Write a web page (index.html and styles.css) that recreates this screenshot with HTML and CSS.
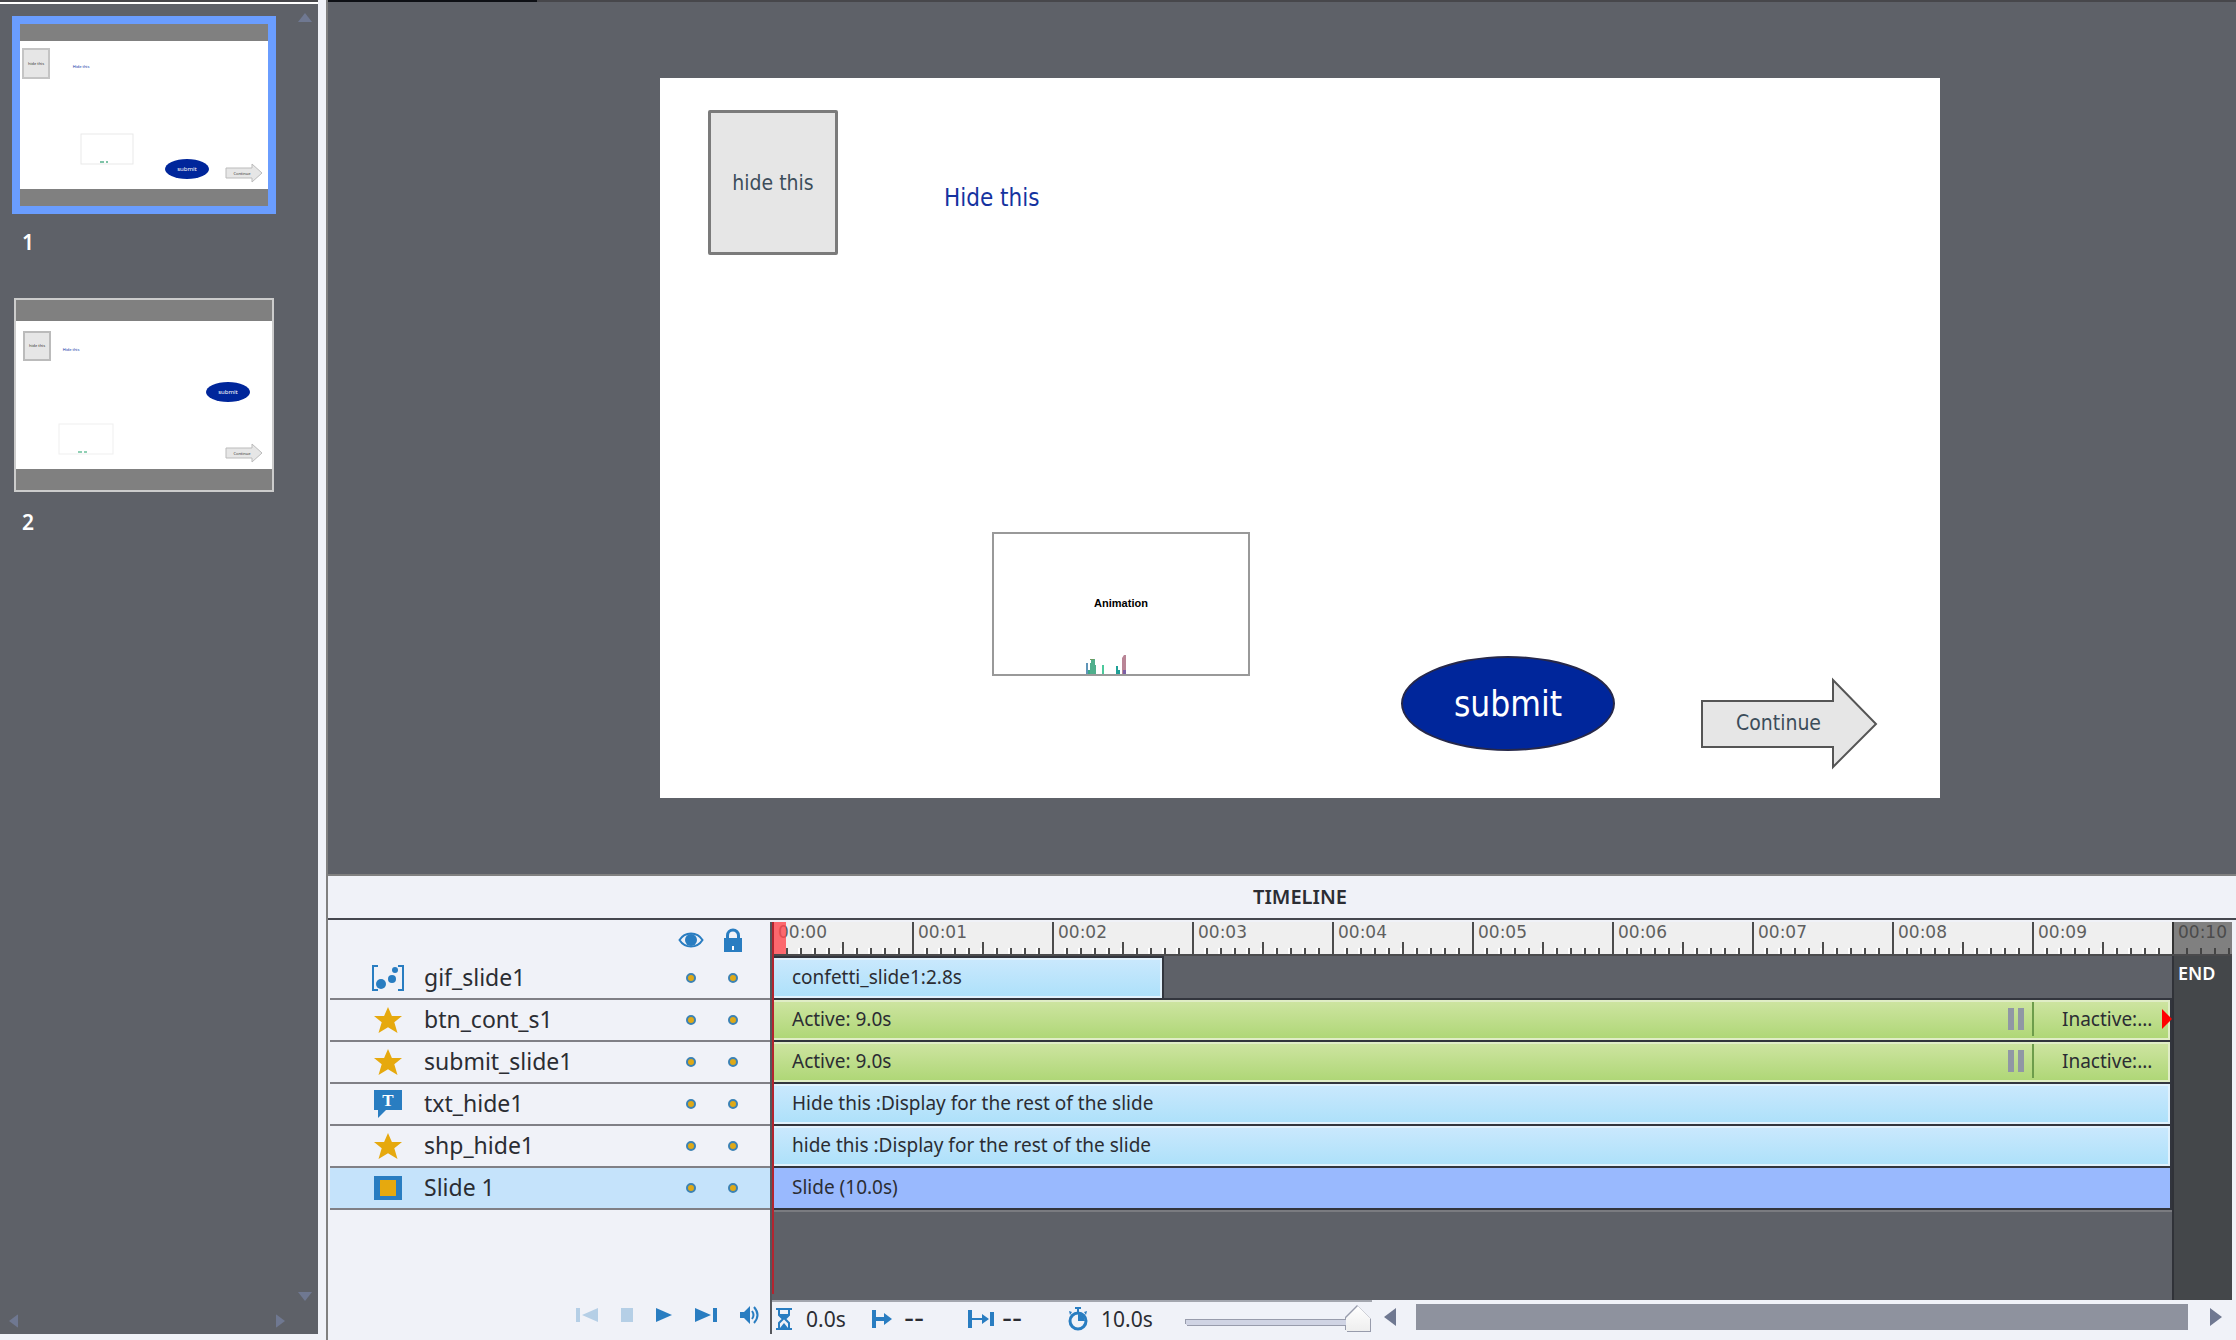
FILE: index.html
```html
<!DOCTYPE html>
<html lang="en">
<head>
<meta charset="utf-8">
<title>Timeline editor</title>
<link rel="stylesheet" href="styles.css">
</head>
<body>
<svg class="defs" aria-hidden="true">
  <defs>
    <symbol id="star" viewBox="0 0 28 26"><path fill="#e6a90e" d="M14 0l3.900 9H28l-7.700 6.200L23.500 26 14 20.200 4.500 26l3.200-10.800L0 9h10.100z"/></symbol>
    <symbol id="up" viewBox="0 0 14 9"><path fill="currentColor" d="M7 0l7 9H0z"/></symbol>
    <symbol id="side" viewBox="0 0 12 18"><path fill="currentColor" d="M0 0l12 9-12 9z"/></symbol>
  </defs>
</svg>
<div class="app">
  <aside class="filmstrip">
    <div class="film-body">
      <ol class="thumbs">
        <li>
          <button class="thumb selected" aria-label="Slide 1">
            <svg viewBox="0 0 248 182" width="248" height="182">
              <rect width="248" height="182" fill="#808080"/><rect y="17" width="248" height="148" fill="#fff"/>
              <rect x="3" y="25" width="26" height="29" fill="#e6e6e6" stroke="#c4c4c4" stroke-width="2"/>
              <text x="16" y="41" class="tiny dark">hide this</text>
              <text x="61" y="44" class="tiny blue">Hide this</text>
              <rect x="61" y="110" width="52" height="30" fill="#fff" stroke="#e9e9e9"/>
              <path d="M80 138h4M86 138h2" stroke="#7fc4a8" stroke-width="2"/>
              <ellipse cx="167" cy="145" rx="22" ry="10" fill="#00269b"/>
              <text x="167" y="147" class="small white">submit</text>
              <path d="M206 144h26v-4l10 9-10 9v-4h-26z" fill="#e6e6e6" stroke="#bbb"/>
              <text x="222" y="151" class="tiny dark">Continue</text>
            </svg>
          </button>
          <span class="num">1</span>
        </li>
        <li>
          <button class="thumb" aria-label="Slide 2">
            <svg viewBox="0 0 256 190" width="256" height="190">
              <rect width="256" height="190" fill="#808080"/><rect y="21" width="256" height="148" fill="#fff"/>
              <rect x="8" y="32" width="26" height="28" fill="#e6e6e6" stroke="#bbb" stroke-width="2"/>
              <text x="21" y="47" class="tiny dark">hide this</text>
              <text x="55" y="51" class="tiny blue">Hide this</text>
              <rect x="43" y="124" width="54" height="30" fill="#fff" stroke="#efefef"/>
              <path d="M62 152h4M68 152h3" stroke="#8fd0b4" stroke-width="2"/>
              <ellipse cx="212" cy="92" rx="22" ry="10" fill="#00269b"/>
              <text x="212" y="94" class="small white">submit</text>
              <path d="M210 148h26v-4l10 9-10 9v-4h-26z" fill="#e6e6e6" stroke="#bbb"/>
              <text x="226" y="155" class="tiny dark">Continue</text>
            </svg>
          </button>
          <span class="num">2</span>
        </li>
      </ol>
      <div class="vscroll">
        <button aria-label="Scroll up"><svg width="14" height="9"><use href="#up"/></svg></button>
        <button class="flip" aria-label="Scroll down"><svg width="14" height="9"><use href="#up"/></svg></button>
      </div>
    </div>
    <div class="hscroll">
      <button class="flip" aria-label="Scroll left"><svg width="9" height="14" viewBox="0 0 12 18"><use href="#side"/></svg></button>
      <button aria-label="Scroll right"><svg width="9" height="14" viewBox="0 0 12 18"><use href="#side"/></svg></button>
    </div>
  </aside>

  <main class="work">
    <div class="topstrip"><span></span></div>
    <section class="stage">
      <div class="slide">
        <div class="obj box">hide this</div>
        <div class="obj caption">Hide this</div>
        <div class="obj anim">
          <span>Animation</span>
          <svg width="44" height="20" viewBox="0 0 44 20">
            <rect x="1" y="9" width="2" height="11" fill="#5f95b8"/><rect x="3" y="16" width="3" height="4" fill="#3aa888"/>
            <path d="M5 9h1V5h4v6h1v9H5z" fill="#4faf8c"/><path d="M5 5h4v1H5z" fill="#6e9c62"/>
            <rect x="17" y="11" width="2" height="9" fill="#4cc99b"/><path d="M31 12h2v4h2v4h-4z" fill="#1fa097"/>
            <path d="M37 4l2-3h2v19h-4z" fill="#b98596"/><rect x="38" y="16" width="3" height="4" fill="#7b5fa5"/>
          </svg>
        </div>
        <button class="obj submit">submit</button>
        <button class="obj cont">
          <svg width="180" height="94" viewBox="0 0 180 94"><path d="M2 24h131V3l43 44-43 43V70H2z" fill="#e6e6e6" stroke="#555" stroke-width="2"/></svg>
          <span>Continue</span>
        </button>
      </div>
    </section>

    <section class="timeline">
      <h2>TIMELINE</h2>
      <div class="panes">
        <div class="layers">
          <div class="layer-head">
            <svg width="26" height="16" viewBox="0 0 26 16"><path d="M1.500 8C4 4 8 1.500 13 1.500S22 4 24.500 8C22 12 18 14.500 13 14.500S4 12 1.500 8z" fill="#f0f2f8" stroke="#297dc1" stroke-width="2"/><circle cx="13" cy="8" r="6" fill="#297dc1"/></svg>
            <svg width="18" height="24" viewBox="0 0 18 24"><path d="M3.500 11V7.500a5.500 5.500 0 0 1 11 0V11" fill="none" stroke="#297dc1" stroke-width="3"/><path fill="#297dc1" d="M0 10h18v14H0z"/><path fill="#fff" d="M8 18h2v4H8z"/></svg>
          </div>
          <div class="layer">
            <svg width="32" height="26" viewBox="0 0 32 26"><path d="M6 1H1v24h5M26 1h5v24h-5" fill="none" stroke="#297dc1" stroke-width="2"/><g fill="#297dc1"><circle cx="9" cy="19" r="5"/><circle cx="20" cy="14" r="4"/><circle cx="23" cy="5" r="3"/></g></svg>
            <span>gif_slide1</span><input type="checkbox" aria-label="Show gif_slide1"><input type="checkbox" aria-label="Lock gif_slide1">
          </div>
          <div class="layer"><svg width="28" height="26"><use href="#star"/></svg><span>btn_cont_s1</span><input type="checkbox" aria-label="Show btn_cont_s1"><input type="checkbox" aria-label="Lock btn_cont_s1"></div>
          <div class="layer"><svg width="28" height="26"><use href="#star"/></svg><span>submit_slide1</span><input type="checkbox" aria-label="Show submit_slide1"><input type="checkbox" aria-label="Lock submit_slide1"></div>
          <div class="layer">
            <svg width="28" height="28" viewBox="0 0 28 28"><path d="M0 0h28v20H12l-8 8v-8H0z" fill="#297dc1"/><text x="14" y="16" class="tee">T</text></svg>
            <span>txt_hide1</span><input type="checkbox" aria-label="Show txt_hide1"><input type="checkbox" aria-label="Lock txt_hide1">
          </div>
          <div class="layer"><svg width="28" height="26"><use href="#star"/></svg><span>shp_hide1</span><input type="checkbox" aria-label="Show shp_hide1"><input type="checkbox" aria-label="Lock shp_hide1"></div>
          <div class="layer current"><svg width="28" height="24"><rect width="28" height="24" fill="#297dc1"/><rect x="6" y="4" width="16" height="16" fill="#e6a90e"/></svg><span>Slide 1</span><input type="checkbox" aria-label="Show Slide 1"><input type="checkbox" aria-label="Lock Slide 1"></div>
          <div class="transport">
            <button disabled aria-label="Go to start"><svg width="22" height="14"><path fill="currentColor" d="M0 0h4v14H0zM22 0v14L6 7z"/></svg></button>
            <button disabled aria-label="Stop"><svg width="12" height="14"><path fill="currentColor" d="M0 0h12v14H0z"/></svg></button>
            <button aria-label="Play"><svg width="16" height="14"><path fill="currentColor" d="M0 0l16 7-16 7z"/></svg></button>
            <button aria-label="Go to end"><svg width="22" height="14"><path fill="currentColor" d="M0 0l16 7-16 7zM18 0h4v14h-4z"/></svg></button>
            <button aria-label="Sound"><svg width="20" height="18" viewBox="0 0 20 18"><path fill="currentColor" d="M0 6h4l6-6v18l-6-6H0z"/><path d="M12 5q3 4 0 8M14 1q7 8 0 16" fill="none" stroke="currentColor" stroke-width="2"/></svg></button>
          </div>
        </div>

        <div class="tracks">
          <div class="ruler">
            <span>00:00</span><span>00:01</span><span>00:02</span><span>00:03</span><span>00:04</span><span>00:05</span><span>00:06</span><span>00:07</span><span>00:08</span><span>00:09</span><span class="past">00:10</span>
          </div>
          <div class="area">
            <div class="rows">
              <div class="row"><div class="clip sky gif">confetti_slide1:2.8s</div></div>
              <div class="row"><div class="clip green"><span class="active">Active: 9.0s</span><i class="pause"></i><span class="inactive">Inactive:...</span><i class="marker"></i></div></div>
              <div class="row"><div class="clip green"><span class="active">Active: 9.0s</span><i class="pause"></i><span class="inactive">Inactive:...</span></div></div>
              <div class="row"><div class="clip sky">Hide this :Display for the rest of the slide</div></div>
              <div class="row"><div class="clip sky">hide this :Display for the rest of the slide</div></div>
              <div class="row"><div class="clip base">Slide (10.0s)</div></div>
              <div class="underline"></div>
            </div>
            <div class="end">END</div>
          </div>
          <div class="playhead"></div>
          <div class="status">
            <div class="times">
              <svg width="16" height="22" viewBox="0 0 16 22"><path d="M0 0h16v2H0zM0 20h16v2H0z" fill="#297dc1"/><path d="M3 2v5l4 4-4 4v5M13 2v5l-4 4 4 4v5" fill="none" stroke="#297dc1" stroke-width="2"/><path d="M3 6h10l-4 5H7zM4 20l4-5 4 5z" fill="#297dc1"/></svg>
              <span class="t1">0.0s</span>
              <svg width="20" height="18" viewBox="0 0 20 18"><path d="M0 0h4v7h8V3l8 6-8 6v-4H4v7H0z" fill="#297dc1"/></svg>
              <span class="t2">--</span>
              <svg width="26" height="18" viewBox="0 0 26 18"><path d="M0 0h4v8h10V4l7 5-7 5v-4H4v8H0zM22 2h4v14h-4z" fill="#297dc1"/></svg>
              <span class="t3">--</span>
              <svg width="20" height="24" viewBox="0 0 20 24"><path d="M7 0h6v2h-2v3H9V2H7zM1 4l3 1-2 3zM19 4l-3 1 2 3z" fill="#297dc1"/><circle cx="10" cy="14" r="8" fill="#f0f2f8" stroke="#297dc1" stroke-width="3"/><path d="M10 7a7 7 0 0 1 7 7h-7z" fill="#297dc1"/></svg>
              <span class="t4">10.0s</span>
              <input type="range" min="0" max="100" value="100" aria-label="Timeline zoom">
            </div>
            <div class="bar">
              <button class="flip" aria-label="Scroll timeline left"><svg width="12" height="18"><use href="#side"/></svg></button>
              <div class="grip"></div>
              <button aria-label="Scroll timeline right"><svg width="12" height="18"><use href="#side"/></svg></button>
            </div>
          </div>
        </div>
      </div>
    </section>
  </main>
</div>
</body>
</html>
```
FILE: styles.css
```css
* { box-sizing: border-box; }
body { margin: 0; background: #f0f2f8; font-family: "Noto Sans", "Open Sans", sans-serif; color: #2b2d33; }
button { padding: 0; border: 0; background: none; color: inherit; font: inherit; }
svg, button { display: block; }
.defs { position: absolute; width: 0; height: 0; }
.flip { transform: rotate(180deg); }

.app { display: grid; grid-template-columns: 326px 1fr; height: 100vh; }

/* Slide list */
.filmstrip { display: flex; flex-direction: column; margin: 0 8px 6px 0; border-top: 2px solid #47474b; background: #5e6168; color: #6f7891; }
.filmstrip::before { content: ""; height: 2px; background: #fff; }
.film-body { display: flex; flex: 1; justify-content: space-between; }
.thumbs { display: flex; flex-direction: column; margin: 0; padding: 12px 0 0 12px; list-style: none; }
.thumbs li { height: 280px; }
.thumb { width: 264px; height: 198px; display: grid; place-items: center; }
.thumb svg { outline: 2px solid #ccc; }
.thumb.selected svg { outline: 8px solid #6a9dff; }
.num { display: block; margin: 12px 0 0 10px; color: #fff; font-size: 21px; font-weight: 600; line-height: 32px; }
.vscroll { display: flex; flex-direction: column; justify-content: space-between; padding: 9px 6px 0 0; }
.hscroll { display: flex; justify-content: space-between; padding: 13px 33px 6px 9px; }
.tiny { font-size: 4px; text-anchor: middle; }
.small { font-size: 6px; text-anchor: middle; }
.dark { fill: #333; }
.blue { fill: #0a2fa5; }
.white { fill: #fff; }

/* Stage */
.work { display: flex; flex-direction: column; min-width: 0; border-left: 2px solid #808080; }
.topstrip { height: 2px; background: #47474b; }
.topstrip span { display: block; width: 209px; height: 2px; background: #0e1015; }
.stage { display: grid; flex: 1; place-items: center; padding-left: 36px; background: #5e6168; }
.slide { position: relative; width: 1280px; height: 720px; background: #fff; font-family: "DejaVu Sans Condensed", "Noto Sans", sans-serif; }
.obj { position: absolute; }
.box { left: 48px; top: 32px; width: 130px; height: 145px; border: 3px solid #7b7b7b; border-radius: 2px; background: #e6e6e6; color: #3c4d5a; font-size: 21px; line-height: 140px; text-align: center; }
.caption { left: 284px; top: 104px; color: #15339f; font-size: 24px; line-height: 32px; }
.anim { display: flex; flex-direction: column; justify-content: flex-end; left: 332px; top: 454px; width: 258px; height: 144px; border: 2px solid #999; color: #000; font: bold 11px/20px "Liberation Sans", sans-serif; text-align: center; }
.anim span { margin-bottom: 41px; }
.anim svg { margin-left: 91px; }
.submit { left: 741px; top: 578px; width: 214px; height: 95px; border: 2px solid #26284a; border-radius: 50%; background: #00269b; color: #fff; font-size: 35px; line-height: 88px; }
.cont { left: 1040px; top: 599px; display: grid; color: #3c4d5a; font-size: 21px; line-height: 92px; }
.cont > * { grid-area: 1 / 1; }
.cont span { padding-right: 23px; }

/* Timeline */
.timeline { display: flex; flex-direction: column; height: 466px; border-top: 2px solid #808080; }
h2 { margin: 0; padding-left: 36px; border-bottom: 2px solid #45474f; font-size: 20px; font-weight: 600; line-height: 42px; text-align: center; }
.panes { display: grid; flex: 1; grid-template-columns: 442px 1fr; padding: 2px 4px 0 0; }
.layers { display: flex; flex-direction: column; padding-left: 2px; }
.layer-head { display: flex; align-items: center; justify-content: flex-end; gap: 20px; height: 36px; padding-right: 28px; }
.layer { display: grid; grid-template-columns: 40px 1fr 42px 42px; align-items: center; height: 42px; padding: 0 16px 0 38px; border-bottom: 2px solid #808086; font-size: 23px; line-height: 30px; }
.layer > * { justify-self: center; }
.layer span { justify-self: start; padding: 0 0 2px 16px; }
.layer input { appearance: none; width: 10px; height: 10px; margin: 0; border: 2px solid #3c82b4; border-radius: 50%; background: #dfa917; }
.current { background: #c5e3fb; }
.tee { fill: #fff; font: bold 17px "Liberation Serif", serif; text-anchor: middle; }
.transport { display: flex; align-items: center; justify-content: flex-end; gap: 23px; margin-top: auto; padding: 0 10px 16px 0; color: #297dc1; }
.transport button:disabled { color: #b5cfe6; }

.tracks { position: relative; display: flex; flex-direction: column; min-width: 0; margin-bottom: 6px; border-left: 2px solid #55575c; }
.ruler { display: flex; height: 34px; border-bottom: 2px solid #4a4a4c; background: #efefef; font-family: "DejaVu Sans", sans-serif; }
.ruler span {
  flex: none; width: 140px; padding-left: 4px; border-left: 2px solid #4c4c4c; color: #5f5f5f; font-size: 17px; line-height: 20px;
  background:
    linear-gradient(#4c4c4c, #4c4c4c) 68px 100% / 2px 12px no-repeat,
    repeating-linear-gradient(to right, #efefef 0 10px, #fff 10px 12px, #4c4c4c 12px 14px) 0 100% / 136px 6px no-repeat;
}
.ruler .past { flex: 1; overflow: hidden; border-color: #333; color: #4b4b4b; background: repeating-linear-gradient(to right, #808080 0 12px, #444 12px 14px) 0 100% / 100% 6px no-repeat #808080; }
.area { display: flex; flex: 1; background: #5e6168; }
.rows { width: 1400px; padding-top: 2px; }
.row { height: 42px; border-bottom: 2px solid #32353d; }
.clip { position: relative; display: flex; align-items: center; width: 1398px; height: 40px; padding: 0 0 2px 18px; border: 2px solid #e0f1fc; box-shadow: 2px 0 #32353d; font-size: 19px; line-height: 24px; white-space: nowrap; }
.sky { background: linear-gradient(#c9e8fd, #aee1fa); }
.gif { width: 390px; box-shadow: 2px 0 #32353d, 0 -2px #32353d, 2px -2px #32353d; }
.green { border-color: #e0edc6; background: linear-gradient(#cde4a0, #afd777); }
.base { border-color: #99b9fe; background: #99b9fe; }
.active { flex: 1; }
.pause { width: 16px; height: 22px; border: solid #9097a5; border-width: 0 6px; }
.inactive { width: 136px; margin-left: 8px; padding-left: 28px; border-left: 2px solid #6d9d4b; line-height: 34px; }
.marker { position: absolute; right: -4px; width: 10px; height: 20px; background: #f00; clip-path: polygon(0 0, 100% 50%, 0 100%); }
.underline { height: 2px; background: #7a7b80; }
.end { flex: 1; padding: 5px 0 0 4px; border-left: 2px solid #303238; background: #44474a; color: #fff; font-size: 18px; font-weight: 600; line-height: 24px; }
.playhead { position: absolute; left: 0; top: 0; width: 14px; height: 32px; background: rgba(255, 70, 77, .8); }
.playhead::after { content: ""; position: absolute; left: 0; top: 0; width: 2px; height: 372px; background: #b3242f; }

.status { display: flex; height: 34px; }
.times { display: flex; align-items: center; width: 600px; padding: 2px 0 0 4px; border-top: 2px solid #a3a6ae; font-size: 21px; line-height: 30px; }
.t1 { width: 80px; padding-left: 14px; }
.t2 { width: 76px; padding-left: 12px; }
.t3 { width: 74px; padding-left: 8px; }
.t2, .t3 { font-family: "DejaVu Sans", sans-serif; font-size: 28px; }
.t4 { width: 98px; padding-left: 13px; }
input[type=range] { appearance: none; width: 184px; height: 28px; margin: 0; background: none; filter: drop-shadow(1px 1px #989cac) drop-shadow(-1px -1px #989cac); }
input[type=range]::-webkit-slider-runnable-track { height: 26px; background: linear-gradient(#d0d4e4, #d0d4e4) 0 14px / 100% 5px no-repeat; }
input[type=range]::-webkit-slider-thumb { appearance: none; width: 24px; height: 25px; background: linear-gradient(#fff, #eee); clip-path: polygon(50% 0, 100% 48%, 100% 100%, 0 100%, 0 48%); }
.bar { display: flex; flex: 1; align-items: center; gap: 20px; padding: 0 10px 0 12px; color: #6f7891; }
.grip { flex: 1; height: 26px; margin-right: 2px; background: #8e929e; }
```
